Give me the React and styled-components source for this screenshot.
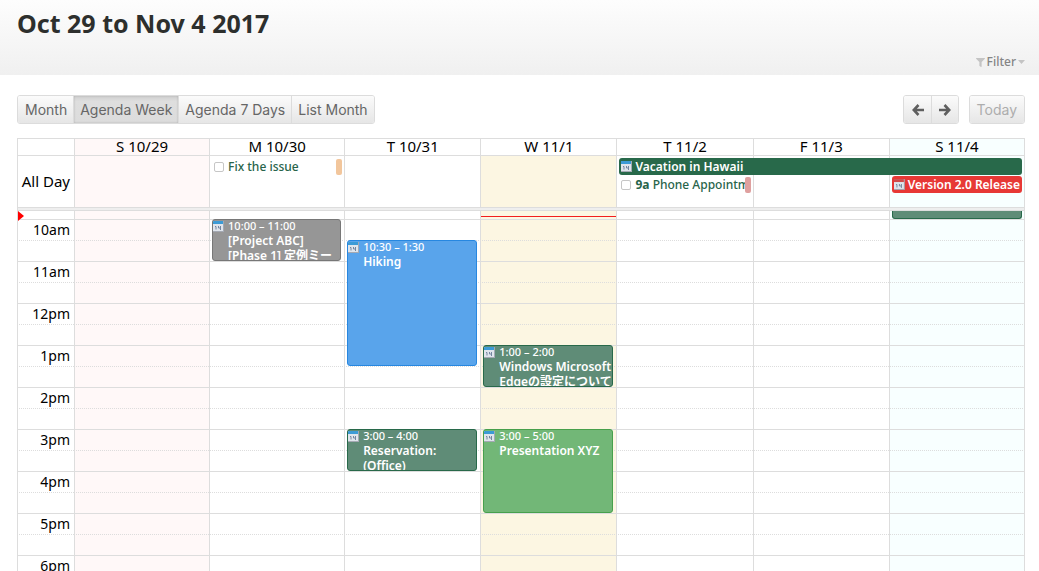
import styled, { createGlobalStyle, css } from 'styled-components';
import { FaFilter } from 'react-icons/fa';

const GlobalStyle = createGlobalStyle`
  * {
    box-sizing: border-box;
  }
  body {
    background: #fff;
    color: #000;
    font-family: 'Noto Sans', 'Noto Sans CJK JP', sans-serif;
    margin: 0;
  }
  svg {
    display: block;
  }
`;

const Page = styled.div`
  display: flex;
  flex-direction: column;
  height: 100vh;
  overflow: hidden;
`;

const Header = styled.header`
  background: linear-gradient(#fdfdfd, #f0f0f0);
  display: flex;
  flex-direction: column;
  flex-shrink: 0;
  padding: 6px 14px 4px 17px;
`;
const Title = styled.h1`
  color: #2d2f2d;
  font-size: 25px;
  font-weight: 700;
  line-height: 34px;
  margin: 0 0 13px;
`;
const FilterButton = styled.button`
  align-items: center;
  align-self: flex-end;
  background: none;
  border: 0;
  color: #858585;
  display: flex;
  font: 500 12px/18px 'Noto Sans', sans-serif;
  gap: 2px;
  padding: 0;

  svg {
    color: #c4c4c4;
  }
`;

const Main = styled.main`
  display: flex;
  flex: 1;
  flex-direction: column;
  min-height: 0;
  padding: 20px 14px 0 17px;
`;
const Toolbar = styled.div`
  display: flex;
  flex-shrink: 0;
  gap: 10px;
  margin-bottom: 14px;
`;
const ButtonGroup = styled.div`
  border: 1px solid #dcdcdc;
  border-radius: 3px;
  display: flex;
  overflow: hidden;

  &:first-child {
    margin-right: auto;
  }
`;
const ToolButton = styled.button`
  align-items: center;
  background: linear-gradient(#fbfbfb, #e6e6e6);
  border: 0;
  border-left: 1px solid #dcdcdc;
  color: #666;
  display: flex;
  font: 400 14px/27px Inter, sans-serif;
  height: 27px;
  padding: 0 6px;

  &:first-child {
    border-left: 0;
    padding-left: 7px;
  }
  &:disabled {
    color: #adadad;
    padding-right: 7px;
  }
  ${({ $active }) =>
    $active &&
    css`
      background: linear-gradient(#cfcfcf, #dedede 20%, #dcdcdc);
      box-shadow: inset 0 0 2px #aaa;
    `}
`;

const Calendar = styled.section`
  display: flex;
  flex: 1;
  flex-direction: column;
  min-height: 0;
`;
const Table = styled.table`
  border-collapse: separate;
  border-spacing: 0;
  table-layout: fixed;
  width: 100%;

  td,
  th {
    padding: 0;
  }
`;
const AxisCol = styled.col`
  width: 57px;
`;
const DayCol = styled.col`
  &:nth-child(2),
  &:nth-child(3) {
    width: 13.4%;
  }
`;
const HeadTable = styled(Table)`
  border-top: 1px solid #ddd;
`;
const tints = {
  sunday: '#fff8f8',
  saturday: '#f8ffff',
  today: '#fcf6e2'
};
const cell = css`
  background: ${({ $tint }) => tints[$tint] || 'transparent'};
  border-left: 1px solid #ddd;

  &:last-child {
    border-right: 1px solid #ddd;
  }
`;
const HeadCell = styled.th`
  ${cell}
  border-bottom: 1px solid #ddd;
  font-size: 15px;
  font-weight: 400;
  height: 17px;
  line-height: 14px;
  vertical-align: top;
`;
const DayCell = styled.td`
  ${cell}
`;
const AxisCell = styled.th`
  border-left: 1px solid #ddd;
  font-size: 14px;
  font-weight: 400;
  text-align: right;

  && {
    padding-right: 4px;
  }
`;
const AllDay = styled.div`
  flex-shrink: 0;
  position: relative;
`;
const AllDayGrid = styled(Table)`
  height: 51px;

  th {
    font-size: 15px;
    padding-bottom: 2px;
  }
`;
const Overlay = styled(Table)`
  inset: 0;
  position: absolute;

  td {
    vertical-align: top;
  }
`;
const TimeBackdrop = styled(Overlay)`
  height: 100%;
`;
const AllDayOverlay = styled(Overlay)`
  padding-top: 2px;
`;
const AllDayEvent = styled.a`
  align-items: center;
  background: ${({ $color }) => $color};
  border-radius: 3px;
  color: #fff;
  display: flex;
  font-size: 12px;
  font-weight: 600;
  gap: 3px;
  height: 17px;
  line-height: 17px;
  margin: 0 3px 1px;
  padding: 0 2px;
  text-decoration: none;
  white-space: nowrap;
`;
const Task = styled.div`
  align-items: center;
  color: #28644a;
  display: flex;
  font-size: 12px;
  font-weight: 500;
  height: 17px;
  line-height: 17px;
  margin: 0 2px 1px 5px;

  label {
    flex: 1;
    min-width: 0;
    overflow: hidden;
    white-space: nowrap;
  }
`;
const Checkbox = styled.input`
  appearance: none;
  background: #fff;
  border: 1px solid #c6c6c6;
  border-radius: 2px;
  flex-shrink: 0;
  height: 10px;
  margin: 0 4px 0 0;
  width: 10px;
`;
const Flag = styled.span`
  background: ${({ $color }) => $color};
  border-radius: 2px;
  flex-shrink: 0;
  height: 16px;
  width: 6px;
`;
const Divider = styled.div`
  background: #eee;
  border: 1px solid #ddd;
  flex-shrink: 0;
  height: 4px;
`;

const TimeGrid = styled.div`
  flex: 1;
  min-height: 0;
  overflow: hidden;
  position: relative;
`;
const SlotTable = styled(Table)`
  position: relative;

  tr {
    height: 21px;
  }
  tr:first-child {
    height: 8px;
  }
  td,
  th {
    border-top: 1px solid #ddd;
    line-height: 20px;
  }
  tr:nth-child(odd) td,
  tr:nth-child(odd) th {
    border-top-style: dotted;
  }
  tr:first-child td,
  tr:first-child th {
    border-top: 0;
  }
`;
const DayColumn = styled.div`
  display: grid;
  grid-auto-rows: 21px;
  grid-template-rows: 8px;
  margin: 0 3px;
  position: relative;
`;
const Event = styled.a`
  background: ${({ $bg }) => $bg};
  border: 1px solid ${({ $border }) => $border};
  border-radius: 3px;
  color: #fff;
  display: grid;
  gap: 4px;
  grid-row: ${({ $row, $span }) => `${$row} / span ${$span}`};
  grid-template-columns: 11px minmax(0, 1fr);
  overflow: hidden;
  text-decoration: none;

  svg {
    margin-top: 1px;
  }
  ${({ $clipped }) =>
    $clipped &&
    css`
      border-radius: 0 0 3px 3px;
      border-top: 0;
    `}
`;
const EventTime = styled.div`
  font-size: 11px;
  font-weight: 500;
  line-height: 12px;
  margin-bottom: 1px;
`;
const EventTitle = styled.div`
  font-size: 12px;
  font-weight: 600;
  line-height: 15px;
`;
const NowLine = styled.div`
  border-top: 1px solid #f21d1d;
  left: -2px;
  position: absolute;
  right: -3px;
  top: 5px;
`;
const NowArrow = styled.div`
  border: 5px solid transparent;
  border-left: 6px solid #f00;
  border-right: 0;
  left: 1px;
  position: absolute;
  top: 0;
`;

const days = [
  { label: 'S 10/29', tint: 'sunday' },
  { label: 'M 10/30' },
  { label: 'T 10/31' },
  { label: 'W 11/1', tint: 'today' },
  { label: 'T 11/2' },
  { label: 'F 11/3' },
  { label: 'S 11/4', tint: 'saturday' }
];

const hours = ['10am', '11am', '12pm', '1pm', '2pm', '3pm', '4pm', '5pm', '6pm'];

const green = { bg: '#5f8c77', border: '#28694a' };

// row 1 is the tail of the 9:30 slot, row 2 starts at 10:00
const events = [
  { day: 1, row: 2, span: 2, time: '10:00 – 11:00', title: '[Project ABC] [Phase 1] 定例ミーティング', bg: '#969696', border: '#777' },
  { day: 2, row: 3, span: 6, time: '10:30 – 1:30', title: 'Hiking', bg: '#59a4eb', border: '#2787e0' },
  { day: 2, row: 12, span: 2, time: '3:00 – 4:00', title: 'Reservation: (Office)', ...green },
  { day: 3, row: 8, span: 2, time: '1:00 – 2:00', title: 'Windows Microsoft Edgeの設定について', ...green },
  { day: 3, row: 12, span: 4, time: '3:00 – 5:00', title: 'Presentation XYZ', bg: '#72b777', border: '#47a04c' },
  { day: 6, row: 1, span: 1, clipped: true, ...green }
];

const CalendarIcon = ({ top = '#3c9bd6' }) => (
  <svg width="11" height="11" viewBox="0 0 11 11" aria-hidden="true">
    <rect width="11" height="11" fill="#a4a9b3" />
    <rect width="10" height="10" fill="#dfe5ec" />
    <rect width="10" height="3" fill={top} />
    <path
      d="M2 5.5h1v3M5.5 5v2H8M7.5 5v4"
      fill="none"
      stroke="#7486a0"
      strokeWidth="1"
    />
  </svg>
);

const Arrow = ({ d }) => (
  <svg width="14" height="12" viewBox="0 0 14 12" aria-hidden="true">
    <path d={d} fill="none" stroke="#5f5f5f" strokeWidth="2.6" />
  </svg>
);

const Caret = () => (
  <svg width="7" height="4" viewBox="0 0 7 4" aria-hidden="true">
    <path d="M0 0h7L3.5 4z" fill="currentColor" />
  </svg>
);

const Columns = () => (
  <colgroup>
    <AxisCol />
    {days.map(({ label }) => (
      <DayCol key={label} />
    ))}
  </colgroup>
);

const Backdrop = ({ as: Component, axis }) => (
  <Component>
    <Columns />
    <tbody>
      <tr>
        <AxisCell scope="row">{axis}</AxisCell>
        {days.map(({ label, tint }) => (
          <DayCell key={label} $tint={tint} />
        ))}
      </tr>
    </tbody>
  </Component>
);

const TaskItem = ({ id, time, title, color }) => (
  <Task>
    <Checkbox type="checkbox" id={id} />
    <label htmlFor={id}>
      {Boolean(time) && <b>{time} </b>}
      {title}
    </label>
    <Flag $color={color} />
  </Task>
);

const AllDayRow = () => (
  <AllDay>
    <Backdrop as={AllDayGrid} axis="All Day" />
    <AllDayOverlay>
      <Columns />
      <tbody>
        <tr>
          <td colSpan={2} />
          <td>
            <TaskItem id="fix" title="Fix the issue" color="#f2c69c" />
          </td>
          <td colSpan={2} />
          <td colSpan={3}>
            <AllDayEvent href="#vacation" $color="#28694a">
              <CalendarIcon />
              Vacation in Hawaii
            </AllDayEvent>
          </td>
        </tr>
        <tr>
          <td colSpan={5} />
          <td>
            <TaskItem
              id="phone"
              time="9a"
              title="Phone Appointment"
              color="#dfa09f"
            />
          </td>
          <td />
          <td>
            <AllDayEvent href="#release" $color="#e73835">
              <CalendarIcon top="#cf4a4a" />
              Version 2.0 Release
            </AllDayEvent>
          </td>
        </tr>
      </tbody>
    </AllDayOverlay>
  </AllDay>
);

const DayEvents = ({ day }) => (
  <DayColumn>
    {events
      .filter(event => event.day === day)
      .map(({ row, span, time, title, bg, border, clipped }) => (
        <Event
          key={row}
          href={`#event-${day}-${row}`}
          $row={row}
          $span={span}
          $bg={bg}
          $border={border}
          $clipped={clipped}
        >
          {Boolean(title) && (
            <>
              <CalendarIcon />
              <div>
                <EventTime>{time}</EventTime>
                <EventTitle>{title}</EventTitle>
              </div>
            </>
          )}
        </Event>
      ))}
    {days[day].tint === 'today' && <NowLine />}
  </DayColumn>
);

const TimeRows = () => (
  <TimeGrid>
    <Backdrop as={TimeBackdrop} />
    <SlotTable>
      <Columns />
      <tbody>
        <tr>
          <AxisCell />
          <td colSpan={7} />
        </tr>
        {hours.flatMap(hour => [
          <tr key={hour}>
            <AxisCell scope="row">{hour}</AxisCell>
            <td colSpan={7} />
          </tr>,
          <tr key={`${hour}-half`}>
            <AxisCell />
            <td colSpan={7} />
          </tr>
        ])}
      </tbody>
    </SlotTable>
    <Overlay>
      <Columns />
      <tbody>
        <tr>
          <td />
          {days.map(({ label }, day) => (
            <td key={label}>
              <DayEvents day={day} />
            </td>
          ))}
        </tr>
      </tbody>
    </Overlay>
    <NowArrow />
  </TimeGrid>
);

const App = () => (
  <Page>
    <GlobalStyle />
    <Header>
      <Title>Oct 29 to Nov 4 2017</Title>
      <FilterButton type="button">
        <FaFilter size={9} />
        Filter
        <Caret />
      </FilterButton>
    </Header>
    <Main>
      <Toolbar>
        <ButtonGroup>
          <ToolButton type="button">Month</ToolButton>
          <ToolButton type="button" $active>
            Agenda Week
          </ToolButton>
          <ToolButton type="button">Agenda 7 Days</ToolButton>
          <ToolButton type="button">List Month</ToolButton>
        </ButtonGroup>
        <ButtonGroup>
          <ToolButton type="button" aria-label="Previous">
            <Arrow d="M7.5 1L2.8 6l4.7 5M3.5 6H13" />
          </ToolButton>
          <ToolButton type="button" aria-label="Next">
            <Arrow d="M6.5 1l4.7 5-4.7 5M10.5 6H1" />
          </ToolButton>
        </ButtonGroup>
        <ButtonGroup>
          <ToolButton type="button" disabled>
            Today
          </ToolButton>
        </ButtonGroup>
      </Toolbar>
      <Calendar>
        <HeadTable>
          <Columns />
          <thead>
            <tr>
              <HeadCell />
              {days.map(({ label, tint }) => (
                <HeadCell
                  key={label}
                  scope="col"
                  $tint={tint === 'today' ? undefined : tint}
                >
                  {label}
                </HeadCell>
              ))}
            </tr>
          </thead>
        </HeadTable>
        <AllDayRow />
        <Divider />
        <TimeRows />
      </Calendar>
    </Main>
  </Page>
);

export default App;
